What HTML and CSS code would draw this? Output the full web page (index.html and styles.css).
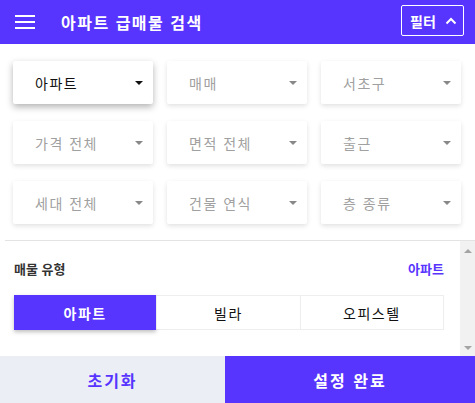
FILE: index.html
```html
<!DOCTYPE html>
<html lang="ko">
<head>
<meta charset="utf-8">
<title>아파트 급매물 검색</title>
<link rel="stylesheet" href="styles.css">
</head>
<body>
<div class="app">
  <header class="topbar">
    <button class="menu-btn" aria-label="메뉴">
      <svg width="20" height="14" viewBox="0 0 20 14"><rect x="0" y="0" width="20" height="2" fill="#fff"/><rect x="0" y="6" width="20" height="2" fill="#fff"/><rect x="0" y="12" width="20" height="2" fill="#fff"/></svg>
    </button>
    <h1 class="title">아파트 급매물 검색</h1>
    <button class="filter-btn">필터
      <svg width="12" height="8" viewBox="0 0 12 8"><path d="M1.5 6.5 L6 2 L10.5 6.5" fill="none" stroke="#fff" stroke-width="2"/></svg>
    </button>
  </header>

  <section class="filters">
    <div class="select active"><span class="label">아파트</span><span class="caret"></span></div>
    <div class="select"><span class="label ph">매매</span><span class="caret"></span></div>
    <div class="select"><span class="label ph">서초구</span><span class="caret"></span></div>
    <div class="select"><span class="label ph">가격 전체</span><span class="caret"></span></div>
    <div class="select"><span class="label ph">면적 전체</span><span class="caret"></span></div>
    <div class="select"><span class="label ph">출근</span><span class="caret"></span></div>
    <div class="select"><span class="label ph">세대 전체</span><span class="caret"></span></div>
    <div class="select"><span class="label ph">건물 연식</span><span class="caret"></span></div>
    <div class="select"><span class="label ph">층 종류</span><span class="caret"></span></div>
  </section>

  <section class="panel">
    <div class="panel-inner">
      <div class="panel-head">
        <span class="panel-title">매물 유형</span>
        <span class="panel-value">아파트</span>
      </div>
      <div class="segments">
        <button class="seg on">아파트</button>
        <button class="seg">빌라</button>
        <button class="seg">오피스텔</button>
      </div>
    </div>
    <div class="scrollbar" aria-hidden="true">
      <span class="arrow up"></span>
      <span class="arrow down"></span>
    </div>
  </section>

  <footer class="actions">
    <button class="reset">초기화</button>
    <button class="done">설정 완료</button>
  </footer>
</div>
</body>
</html>
```
FILE: styles.css
```css
* { box-sizing: border-box; }
html, body { margin: 0; padding: 0; }
body {
  font-family: "Noto Sans CJK KR", "Noto Sans", sans-serif;
  background: #fff;
  color: #222;
}
button { font-family: inherit; cursor: pointer; }
.app {
  width: 475px;
  height: 403px;
  display: flex;
  flex-direction: column;
  overflow: hidden;
}
.topbar {
  height: 44px;
  flex: none;
  background: #5835ff;
  display: flex;
  align-items: center;
  padding: 0 11px 0 15px;
}
.menu-btn {
  background: none;
  border: 0;
  padding: 0;
  width: 20px;
  height: 14px;
  display: flex;
}
.title {
  margin: 0 0 0 26px;
  color: #fff;
  font-size: 16px;
  font-weight: 700;
  letter-spacing: 1.5px;
  flex: 1;
  line-height: 1;
}
.filter-btn {
  width: 63px;
  height: 31px;
  margin-top: -3px;
  border: 1px solid #fff;
  border-radius: 2px;
  background: transparent;
  color: #fff;
  font-size: 14px;
  font-weight: 700;
  display: flex;
  align-items: center;
  justify-content: center;
  gap: 9px;
  padding: 0 0 0 2px;
}
.filters {
  flex: none;
  display: grid;
  grid-template-columns: repeat(3, 140px);
  column-gap: 14px;
  row-gap: 17px;
  padding: 17px 0 16px 13px;
}
.select {
  height: 43px;
  background: #fff;
  border-radius: 2px;
  box-shadow: 0 2px 5px rgba(0,0,0,0.12);
  display: flex;
  align-items: center;
  padding: 0 10px 0 22px;
}
.select.active { box-shadow: 0 3px 7px rgba(0,0,0,0.3); }
.label {
  flex: 1;
  font-size: 14px;
  letter-spacing: 1.5px;
  color: #111;
}
.label.ph { color: #a0a0a0; }
.caret {
  width: 0; height: 0;
  border-left: 4px solid transparent;
  border-right: 4px solid transparent;
  border-top: 4px solid #888;
}
.active .caret { border-top-color: #111; }
.panel {
  flex: 1;
  margin-left: 5px;
  border-top: 1px solid #e3e3e3;
  display: flex;
  min-height: 0;
}
.panel-inner {
  flex: 1;
  padding: 0 16px 0 9px;
}
.scrollbar {
  width: 15px;
  flex: none;
  background: #f1f1f1;
  display: flex;
  flex-direction: column;
  justify-content: space-between;
  align-items: center;
  padding: 8px 0 6px;
}
.arrow {
  width: 0; height: 0;
  border-left: 4px solid transparent;
  border-right: 4px solid transparent;
}
.arrow.up { border-bottom: 4px solid #a3a3a3; }
.arrow.down { border-top: 4px solid #a3a3a3; }
.panel-head {
  display: flex;
  justify-content: space-between;
  align-items: center;
  height: 54px;
  font-size: 13px;
  font-weight: 700;
}
.panel-title { color: #333; }
.panel-value { color: #5835ff; }
.segments {
  display: flex;
  border: 1px solid #eee;
  height: 35px;
}
.seg {
  flex: 1;
  border: 0;
  border-left: 1px solid #eee;
  background: #fff;
  font-size: 14px;
  color: #111;
  letter-spacing: 1.5px;
  padding: 0;
}
.seg:first-child { border-left: 0; }
.seg.on {
  background: #5835ff;
  color: #fff;
  font-weight: 700;
  margin: -1px 0 -1px -1px;
  box-shadow: 0 2px 4px rgba(0,0,0,0.25);
}
.actions {
  flex: none;
  height: 47px;
  display: flex;
}
.actions button {
  border: 0;
  font-size: 16px;
  font-weight: 700;
  letter-spacing: 2px;
}
.reset { width: 225px; background: #eceef6; color: #5835ff; }
.done { flex: 1; background: #5835ff; color: #fff; }
```
